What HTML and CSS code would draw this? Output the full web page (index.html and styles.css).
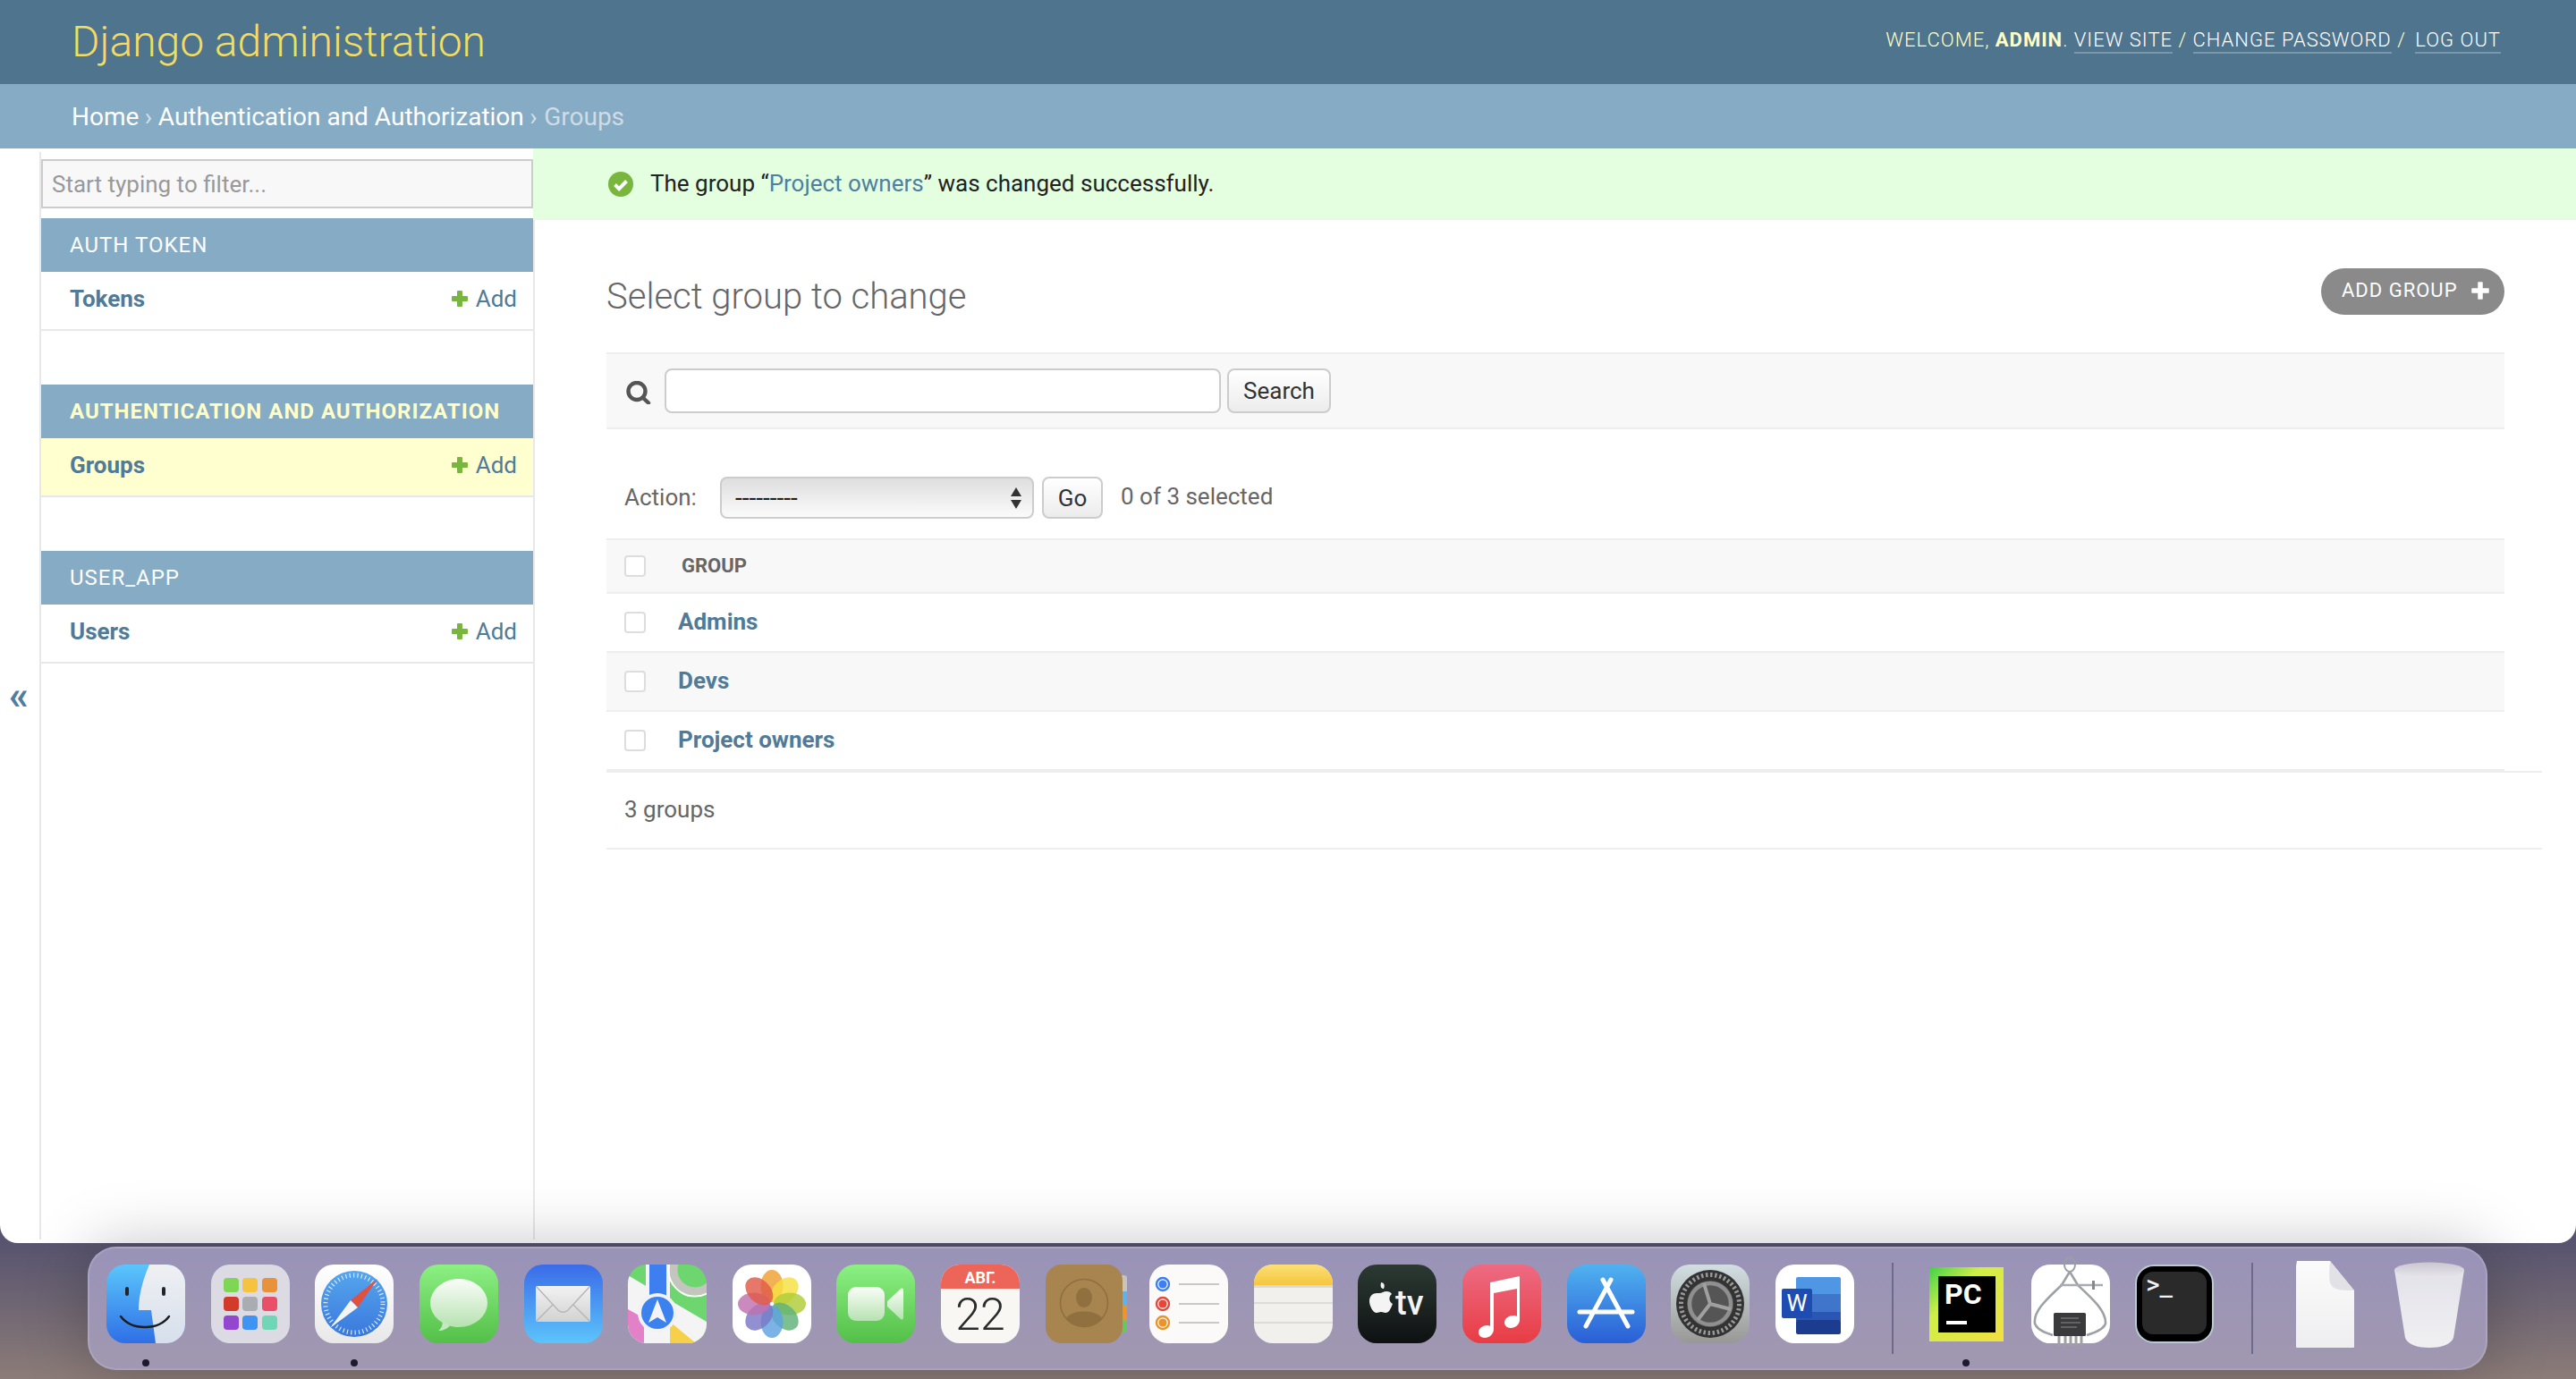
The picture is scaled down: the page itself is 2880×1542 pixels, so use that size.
FILE: index.html
```html
<!DOCTYPE html>
<html lang="en">
<head>
<meta charset="utf-8">
<title>Select group to change | Django site admin</title>
<link rel="stylesheet" href="styles.css">
</head>
<body>
<div class="window">
  <header class="site-header">
    <a class="site-name" href="#">Django administration</a>
    <div class="user-tools">WELCOME, <strong>ADMIN</strong>. <a href="#">VIEW SITE</a> / <a href="#">CHANGE PASSWORD</a> / <a class="logout" href="#">LOG OUT</a></div>
  </header>
  <nav class="breadcrumbs"><a href="#">Home</a> › <a href="#">Authentication and Authorization</a> › <span class="crumb-current">Groups</span></nav>
  <div class="main">
    <div class="toggle">«</div>
    <aside class="sidebar">
      <input class="filter" type="text" placeholder="Start typing to filter...">
      <section class="module">
        <h2 class="module-title">AUTH TOKEN</h2>
        <div class="module-row"><a class="model" href="#">Tokens</a><a class="addlink" href="#"><svg class="plus" viewBox="0 0 20 20"><path d="M8 2h4v6h6v4h-6v6H8v-6H2V8h6z"/></svg>Add</a></div>
      </section>
      <section class="module">
        <h2 class="module-title current">AUTHENTICATION AND AUTHORIZATION</h2>
        <div class="module-row selected"><a class="model" href="#">Groups</a><a class="addlink" href="#"><svg class="plus" viewBox="0 0 20 20"><path d="M8 2h4v6h6v4h-6v6H8v-6H2V8h6z"/></svg>Add</a></div>
      </section>
      <section class="module">
        <h2 class="module-title">USER_APP</h2>
        <div class="module-row"><a class="model" href="#">Users</a><a class="addlink" href="#"><svg class="plus" viewBox="0 0 20 20"><path d="M8 2h4v6h6v4h-6v6H8v-6H2V8h6z"/></svg>Add</a></div>
      </section>
    </aside>
    <main class="main-col">
      <div class="message">
        <svg class="msg-icon" viewBox="0 0 28 28"><circle cx="14" cy="14" r="14" fill="#78b63e"/><path d="M7.5 14.5l4.6 4.6 8.4-8.6" fill="none" stroke="#fff" stroke-width="4"/></svg>
        <span class="msg-text">The group “<a href="#">Project owners</a>” was changed successfully.</span>
      </div>
      <div class="content">
        <div class="title-row">
          <h1 class="page-title">Select group to change</h1>
          <a class="add-btn" href="#">ADD GROUP<svg class="add-plus" viewBox="0 0 20 20"><path d="M8 1h4v7h7v4h-7v7H8v-7H1V8h7z"/></svg></a>
        </div>
        <div class="toolbar">
          <svg class="search-icon" viewBox="0 0 29 26"><circle cx="13" cy="11.5" r="9.5" fill="none" stroke="#555" stroke-width="4.4"/><path d="M19.5 18.5l6.5 6" stroke="#555" stroke-width="4.4" stroke-linecap="round"/></svg>
          <input class="search-input" type="text">
          <button class="btn search-btn" type="button">Search</button>
        </div>
        <div class="actions">
          <label class="action-label">Action:</label>
          <div class="select-wrap">
            <select class="action-select"><option>---------</option></select>
            <svg class="select-arrows" viewBox="0 0 14 26"><path d="M7 1l6 10H1zM7 25L1 15h12z" fill="#333"/></svg>
          </div>
          <button class="btn go-btn" type="button">Go</button>
          <span class="counter">0 of 3 selected</span>
        </div>
        <table class="results">
          <thead><tr><th class="check-col"><input class="check" type="checkbox"></th><th class="group-head">GROUP</th></tr></thead>
          <tbody>
            <tr><td class="check-col"><input class="check" type="checkbox"></td><td class="name-col"><a class="model" href="#">Admins</a></td></tr>
            <tr class="alt"><td class="check-col"><input class="check" type="checkbox"></td><td class="name-col"><a class="model" href="#">Devs</a></td></tr>
            <tr class="last"><td class="check-col"><input class="check" type="checkbox"></td><td class="name-col"><a class="model" href="#">Project owners</a></td></tr>
          </tbody>
        </table>
        <p class="paginator">3 groups</p>
      </div>
    </main>
  </div>
</div>

<div class="dock">
  <div class="dock-item">
    <svg class="dock-icon" viewBox="0 0 88 88"><g clip-path="url(#clipIcon)"><rect width="88" height="88" fill="url(#gFinderL)"/><path d="M48 0H88V88H55L50 51H36C36 32 42 14 48 0z" fill="url(#gFinderR)"/></g><rect x="21" y="25" width="4" height="10" rx="2" fill="#20242c"/><rect x="62" y="25" width="4" height="10" rx="2" fill="#20242c"/><path d="M16 58C28 74 58 74 70 58" fill="none" stroke="#1c1c20" stroke-width="2.4" stroke-linecap="round"/></svg>
    <i class="dot"></i>
  </div>
  <div class="dock-item">
    <svg class="dock-icon" viewBox="0 0 88 88"><rect width="88" height="88" rx="21" fill="#dcdbe3"/><rect x="14" y="15" width="17" height="16" rx="4" fill="#7ed654"/><rect x="35" y="15" width="17" height="16" rx="4" fill="#f6c33f"/><rect x="57" y="15" width="17" height="16" rx="4" fill="#e8923a"/><rect x="14" y="36" width="17" height="16" rx="4" fill="#d23a2c"/><rect x="35" y="36" width="17" height="16" rx="4" fill="#a9adb1"/><rect x="57" y="36" width="17" height="16" rx="4" fill="#e94f68"/><rect x="14" y="57" width="17" height="16" rx="4" fill="#9347cf"/><rect x="35" y="57" width="17" height="16" rx="4" fill="#3f93f2"/><rect x="57" y="57" width="17" height="16" rx="4" fill="#6fd6b6"/></svg>
  </div>
  <div class="dock-item">
    <svg class="dock-icon" viewBox="0 0 88 88"><rect width="88" height="88" rx="21" fill="url(#gWhite)"/><circle cx="44" cy="44" r="37" fill="url(#gSafari)"/><circle cx="44" cy="44" r="32" fill="none" stroke="#d6e8fb" stroke-width="5" stroke-dasharray="1.2 3.2"/><path d="M70 16L48 48 40 40z" fill="#e2503f"/><path d="M17 71L40 40 48 48z" fill="#f4f4f4"/></svg>
    <i class="dot"></i>
  </div>
  <div class="dock-item">
    <svg class="dock-icon" viewBox="0 0 88 88"><rect width="88" height="88" rx="21" fill="url(#gMsg)"/><ellipse cx="44" cy="43" rx="32" ry="27" fill="url(#gBub)"/><path d="M26 63c0 5-2 9-5 11 5 0 10-2 13-6z" fill="#c4e8c0"/></svg>
  </div>
  <div class="dock-item">
    <svg class="dock-icon" viewBox="0 0 88 88"><rect width="88" height="88" rx="21" fill="url(#gMail)"/><rect x="13" y="24" width="61" height="40" rx="2" fill="url(#gEnv)"/><path d="M14 25l24 26c3 3 8 3 11 0l24-26M14 63l18-18M73 63L55 45" fill="none" stroke="#b5b5b8" stroke-width="1.4"/></svg>
  </div>
  <div class="dock-item">
    <svg class="dock-icon" viewBox="0 0 88 88"><g clip-path="url(#clipIcon)"><rect width="88" height="88" fill="#6ed66f"/><path d="M0 12L88 64V88H0z" fill="#f4f4f4"/><path d="M0 50L18 60V88H0z" fill="#e280c8"/><path d="M47 64L76 88H47z" fill="#f5d048"/><rect x="20" width="27" height="88" fill="#f4f4f4"/><rect x="24" width="19" height="50" fill="#3d7ff0"/><circle cx="75" cy="6" r="24" fill="none" stroke="#c5c5c0" stroke-width="9"/><circle cx="75" cy="6" r="29.5" fill="none" stroke="#fff" stroke-width="2"/></g><circle cx="33" cy="54" r="22" fill="#f2f2f4"/><circle cx="33" cy="54" r="18" fill="#3b82ee"/><path d="M33 39L43 65 33 59 23 65z" fill="#f4f4f6"/></svg>
  </div>
  <div class="dock-item">
    <svg class="dock-icon" viewBox="0 0 88 88"><rect width="88" height="88" rx="21" fill="#fff"/><g fill-opacity=".82"><ellipse cx="44" cy="24" rx="12.5" ry="18" fill="#f0a030"/><ellipse cx="44" cy="24" rx="12.5" ry="18" fill="#f5e040" transform="rotate(45 44 44)"/><ellipse cx="44" cy="24" rx="12.5" ry="18" fill="#b0cc38" transform="rotate(90 44 44)"/><ellipse cx="44" cy="24" rx="12.5" ry="18" fill="#5fb277" transform="rotate(135 44 44)"/><ellipse cx="44" cy="24" rx="12.5" ry="18" fill="#5ea2e0" transform="rotate(180 44 44)"/><ellipse cx="44" cy="24" rx="12.5" ry="18" fill="#7a78c6" transform="rotate(225 44 44)"/><ellipse cx="44" cy="24" rx="12.5" ry="18" fill="#c070ae" transform="rotate(270 44 44)"/><ellipse cx="44" cy="24" rx="12.5" ry="18" fill="#df5a48" transform="rotate(315 44 44)"/></g></svg>
  </div>
  <div class="dock-item">
    <svg class="dock-icon" viewBox="0 0 88 88"><rect width="88" height="88" rx="21" fill="url(#gMsg)"/><rect x="13" y="25" width="41" height="38" rx="9" fill="url(#gBub)"/><path d="M57 41L72 27c2-1 3 0 3 2v30c0 2-1 3-3 2L57 47z" fill="url(#gBub)"/></svg>
  </div>
  <div class="dock-item">
    <svg class="dock-icon" viewBox="0 0 88 88"><g clip-path="url(#clipIcon)"><rect width="88" height="88" fill="#f8f7f4"/><rect width="88" height="27" fill="#ec6558"/></g><text class="cal-month" x="44" y="21" text-anchor="middle">АВГ.</text><text class="cal-day" x="44" y="73" text-anchor="middle">22</text></svg>
  </div>
  <div class="dock-item">
    <svg class="dock-icon" viewBox="0 0 88 88"><rect x="80" y="12" width="11" height="20" rx="3" fill="#c8c4b8"/><rect x="80" y="30" width="11" height="18" fill="#5ab4f0"/><rect x="80" y="46" width="11" height="18" fill="#ee9428"/><rect x="80" y="62" width="11" height="14" rx="3" fill="#68c860"/><rect width="86" height="88" rx="18" fill="#a8844f"/><circle cx="43" cy="43" r="26.5" fill="none" stroke="#8f6f42" stroke-width="1.6"/><ellipse cx="43" cy="37" rx="9" ry="11" fill="#90703f"/><path d="M23 60c6-10 34-10 40 0-10 12-30 12-40 0z" fill="#90703f"/></svg>
  </div>
  <div class="dock-item">
    <svg class="dock-icon" viewBox="0 0 88 88"><rect width="88" height="88" rx="21" fill="#fbfaf8"/><circle cx="15" cy="22" r="7" fill="#fff" stroke="#3b7ff2" stroke-width="2.4"/><circle cx="15" cy="22" r="4.6" fill="#3b7ff2"/><circle cx="15" cy="44" r="7" fill="#fff" stroke="#e5483a" stroke-width="2.4"/><circle cx="15" cy="44" r="4.6" fill="#e5483a"/><circle cx="15" cy="65" r="7" fill="#fff" stroke="#e8942c" stroke-width="2.4"/><circle cx="15" cy="65" r="4.6" fill="#e8942c"/><path d="M33 22h45M33 44h45M33 65h45" stroke="#b8b8b8" stroke-width="1.6"/></svg>
  </div>
  <div class="dock-item">
    <svg class="dock-icon" viewBox="0 0 88 88"><g clip-path="url(#clipIcon)"><rect width="88" height="88" fill="#f2f0ec"/><rect width="88" height="23" fill="url(#gNote)"/><rect y="23" width="88" height="3" fill="#dcdad6"/></g><path d="M0 43h88M0 65h88" stroke="#d6d4d0" stroke-width="1.5"/></svg>
  </div>
  <div class="dock-item">
    <svg class="dock-icon" viewBox="0 0 88 88"><rect width="88" height="88" rx="21" fill="url(#gTv)"/><path d="M24 32c3 0 5-2 8-2s5 1 6 3c-4 3-3 9 1 11-2 5-4 10-8 10-2 0-3-1-5-1s-3 1-5 1c-4 0-8-8-8-13 0-6 4-9 8-9 1 0 2 0 3 0zM29 27c-3 0-4-2-3-7 3 0 5 3 3 7z" fill="#f4f4f4"/><text class="tv-text" x="42" y="56">tv</text></svg>
  </div>
  <div class="dock-item">
    <svg class="dock-icon" viewBox="0 0 88 88"><rect width="88" height="88" rx="21" fill="url(#gMus)"/><path d="M31 20L64 13V62c0 5-5 9-10 9-4 0-7-3-7-6 0-5 5-8 10-8 2 0 3 0 4 1V27L35 32V72c0 6-5 10-10 10-4 0-7-3-7-6 0-5 5-8 10-8 1 0 2 0 3 1z" fill="#fff"/></svg>
  </div>
  <div class="dock-item">
    <svg class="dock-icon" viewBox="0 0 88 88"><rect width="88" height="88" rx="21" fill="url(#gApp)"/><path d="M49 17L21 69M40 17l28 52M14 53h59" fill="none" stroke="#fff" stroke-width="5" stroke-linecap="round"/></svg>
  </div>
  <div class="dock-item">
    <svg class="dock-icon" viewBox="0 0 88 88"><rect width="88" height="88" rx="21" fill="url(#gGear)"/><circle cx="44" cy="44" r="38" fill="#333"/><circle cx="44" cy="44" r="32.5" fill="none" stroke="#9a9a9a" stroke-width="5" stroke-dasharray="2.4 2.7"/><circle cx="44" cy="44" r="26" fill="#555"/><circle cx="44" cy="44" r="23" fill="none" stroke="#8f8f8f" stroke-width="4.5"/><path d="M44 44L37 21M44 44L67 50M44 44L30 62" stroke="#a0a0a0" stroke-width="4"/></svg>
  </div>
  <div class="dock-item">
    <svg class="dock-icon" viewBox="0 0 88 88"><rect width="88" height="88" rx="21" fill="#fff"/><rect x="23" y="14" width="50" height="21" rx="2" fill="#4f97e4"/><rect x="23" y="33" width="50" height="21" fill="#3f76cc"/><rect x="23" y="53" width="50" height="10" fill="#2b56b4"/><rect x="23" y="62" width="50" height="16" rx="2" fill="#1c3d8f"/><rect x="7" y="27" width="34" height="33" rx="2" fill="#1f4cb0"/><text class="word-w" x="24" y="52" text-anchor="middle">W</text></svg>
  </div>
  <span class="dock-sep first-sep"></span>
  <div class="dock-item">
    <svg class="dock-icon" viewBox="0 0 88 88"><rect x="3" y="3" width="83" height="83" fill="url(#gPc)"/><rect x="13" y="13" width="64" height="63" fill="#000"/><text class="pc-text" x="20" y="44">PC</text><rect x="22" y="63" width="23" height="4" fill="#fff"/></svg>
    <i class="dot"></i>
  </div>
  <div class="dock-item">
    <svg class="dock-icon" viewBox="0 0 88 88"><rect width="88" height="88" rx="21" fill="#fff"/><ellipse cx="43" cy="0" rx="6" ry="8" fill="none" stroke="#9a9ea4" stroke-width="2"/><path d="M43 8L34 23C18 38 2 52 4 66 6 72 14 76 24 79M43 8L52 23C68 38 84 52 83 66 81 72 72 76 62 79" fill="none" stroke="#9da1a6" stroke-width="2.6"/><path d="M32 23H80" stroke="#a8abb0" stroke-width="2.4"/><rect x="68" y="18" width="3" height="10" fill="#888"/><rect x="25" y="54" width="36" height="26" rx="1.5" fill="#3a3a3c"/><path d="M31 80v11M38 80v11M44 80v11M50 80v11M56 80v11" stroke="#a0a0a0" stroke-width="3"/><path d="M33 60h20M33 65h22M33 70h18" stroke="#8a8a8c" stroke-width="1"/></svg>
  </div>
  <div class="dock-item">
    <svg class="dock-icon" viewBox="0 0 88 88"><rect x="1" y="1" width="86" height="86" rx="20" fill="#000" stroke="#b9cad2" stroke-width="2"/><rect x="8" y="8" width="72" height="70" rx="12" fill="#2a2a2a"/><text class="term-text" x="13" y="31">&gt;_</text></svg>
  </div>
  <span class="dock-sep second-sep"></span>
  <div class="dock-item">
    <svg class="dock-icon" viewBox="0 0 88 88"><path d="M12 -4H49L76 29V92a1 1 0 0 1-1 1H12a1 1 0 0 1-1-1V2z" fill="url(#gDoc)"/><path d="M49 -4C48 10 47 21 52 25 56 29 66 29 76 29z" fill="#e2e2e6"/></svg>
  </div>
  <div class="dock-item">
    <svg class="dock-icon" viewBox="0 0 88 88"><path d="M5 6L17 82C20 90 32 93 44 93S68 90 71 82L83 6z" fill="url(#gTrash)"/><ellipse cx="44" cy="6" rx="39" ry="8.5" fill="url(#gTrashTop)"/></svg>
  </div>
</div>

<svg class="defs-holder" width="0" height="0" aria-hidden="true">
  <defs>
    <clipPath id="clipIcon"><rect width="88" height="88" rx="21"/></clipPath>
    <linearGradient id="gWhite" x1="0" y1="0" x2="0" y2="1"><stop offset="0" stop-color="#fff"/><stop offset="1" stop-color="#e8e8e8"/></linearGradient>
    <linearGradient id="gFinderL" x1="0" y1="0" x2="0" y2="1"><stop offset="0" stop-color="#5ac6fb"/><stop offset="1" stop-color="#2f6fe6"/></linearGradient>
    <linearGradient id="gFinderR" x1="0" y1="0" x2="0" y2="1"><stop offset="0" stop-color="#eff0f3"/><stop offset="1" stop-color="#d6dfec"/></linearGradient>
    <linearGradient id="gSafari" x1="0" y1="0" x2="0" y2="1"><stop offset="0" stop-color="#55a6ee"/><stop offset="1" stop-color="#3a78dc"/></linearGradient>
    <linearGradient id="gMsg" x1="0" y1="0" x2="0" y2="1"><stop offset="0" stop-color="#8cf083"/><stop offset="1" stop-color="#53bf48"/></linearGradient>
    <linearGradient id="gBub" x1="0" y1="0" x2="0" y2="1"><stop offset="0" stop-color="#fafdf9"/><stop offset="1" stop-color="#b6e2b0"/></linearGradient>
    <linearGradient id="gMail" x1="0" y1="0" x2="0" y2="1"><stop offset="0" stop-color="#3a6ce8"/><stop offset="1" stop-color="#5cc4fb"/></linearGradient>
    <linearGradient id="gEnv" x1="0" y1="0" x2="0" y2="1"><stop offset="0" stop-color="#f2f2f2"/><stop offset="1" stop-color="#d2d2d2"/></linearGradient>
    <linearGradient id="gNote" x1="0" y1="0" x2="0" y2="1"><stop offset="0" stop-color="#fbdf76"/><stop offset="1" stop-color="#f6c63e"/></linearGradient>
    <linearGradient id="gTv" x1="0" y1="0" x2="0" y2="1"><stop offset="0" stop-color="#2c3a33"/><stop offset="1" stop-color="#0e1112"/></linearGradient>
    <linearGradient id="gMus" x1="0" y1="0" x2="0" y2="1"><stop offset="0" stop-color="#ed6b82"/><stop offset="1" stop-color="#e83c44"/></linearGradient>
    <linearGradient id="gApp" x1="0" y1="0" x2="0" y2="1"><stop offset="0" stop-color="#50b2f0"/><stop offset="1" stop-color="#2a5ed6"/></linearGradient>
    <linearGradient id="gGear" x1="0" y1="0" x2="0" y2="1"><stop offset="0" stop-color="#d2dee2"/><stop offset="1" stop-color="#989896"/></linearGradient>
    <linearGradient id="gPc" x1="0" y1="0" x2="1" y2="1"><stop offset="0" stop-color="#3fd04a"/><stop offset=".35" stop-color="#d0ee48"/><stop offset="1" stop-color="#f2e040"/></linearGradient>
    <linearGradient id="gDoc" x1="0" y1="0" x2="0" y2="1"><stop offset="0" stop-color="#fbfbfb"/><stop offset="1" stop-color="#eeeef0"/></linearGradient>
    <linearGradient id="gTrash" x1="0" y1="0" x2="0" y2="1"><stop offset="0" stop-color="#e4e2ea"/><stop offset="1" stop-color="#f0f0f2"/></linearGradient>
    <linearGradient id="gTrashTop" x1="0" y1="0" x2="0" y2="1"><stop offset="0" stop-color="#c9c6d0"/><stop offset="1" stop-color="#e8e6ec"/></linearGradient>
  </defs>
</svg>
</body>
</html>
```

FILE: styles.css
```css
* { box-sizing: border-box; }
html, body { margin: 0; padding: 0; }
body {
  width: 2880px;
  height: 1542px;
  overflow: hidden;
  font-family: Roboto, "Liberation Sans", sans-serif;
  font-size: 26px;
  color: #333;
  background: linear-gradient(180deg, #58546f 1390px, #8c7c78 1542px);
}
a { text-decoration: none; color: #4f7fa0; }

.window {
  height: 1390px;
  background: #fff;
  border-radius: 0 0 20px 20px;
  overflow: hidden;
  display: flex;
  flex-direction: column;
  padding-bottom: 4px;
}

.site-header {
  height: 94px;
  flex: none;
  background: #4f748e;
  display: flex;
  align-items: center;
  justify-content: space-between;
  padding: 0 84px 2px 80px;
}
.site-name { font-size: 48px; font-weight: 300; color: #f2dc62; }
.user-tools {
  font-size: 22px;
  font-weight: 300;
  letter-spacing: 1px;
  color: #ffffc8;
  margin-bottom: 4px;
  white-space: nowrap;
}
.user-tools strong { font-weight: 700; }
.user-tools a {
  color: #fff;
  padding-bottom: 1px;
  border-bottom: 2px solid rgba(255,255,255,.25);
}
.user-tools .logout { margin-left: 4px; }

.breadcrumbs {
  height: 72px;
  flex: none;
  background: #85abc5;
  display: flex;
  align-items: center;
  padding: 0 80px;
  color: #d3e0ea;
  font-size: 28px;
  gap: 6.5px;
}
.breadcrumbs a { color: #fff; }
.crumb-current { color: #cfdce6; margin-left: 1px; }

.main { flex: 1; display: flex; min-height: 0; }

.toggle {
  width: 46px;
  flex: none;
  margin-top: 4px;
  border-right: 2px solid #e8e8e8;
  color: #4f7fa0;
  font-size: 44px;
  font-weight: 700;
  display: flex;
  align-items: center;
  justify-content: center;
  padding-right: 2px;
}

.sidebar {
  width: 552px;
  flex: none;
  border-right: 2px solid #e8e8e8;
  padding-top: 12px;
}
.filter {
  display: block;
  width: 100%;
  height: 55px;
  margin-bottom: 11px;
  padding: 0 10px;
  border: 2px solid #ccc;
  background: #f8f8f8;
  font: 400 26px Roboto, sans-serif;
  outline: none;
}
.filter::placeholder { color: #999; opacity: 1; }

.module { margin-bottom: 60px; }
.module-title {
  margin: 0;
  height: 60px;
  padding-left: 32px;
  background: #85abc5;
  color: #fff;
  font-size: 24px;
  font-weight: 400;
  letter-spacing: 1px;
  line-height: 60px;
  white-space: nowrap;
}
.module-title.current { color: #ffffc8; font-weight: 700; }
.module-row {
  height: 66px;
  padding: 0 18px 4px 32px;
  display: flex;
  align-items: center;
  justify-content: space-between;
  border-bottom: 2px solid #e8e8e8;
  font-size: 26px;
}
.module-row.selected { background: #ffffd0; }
.model { font-weight: 700; font-size: 26px; color: #4f7b99; }
.addlink { display: flex; align-items: center; gap: 8px; color: #4f7b99; }
.plus { width: 20px; height: 20px; }
.plus path { fill: #78b63e; stroke: #78b63e; stroke-width: 2; stroke-linejoin: round; }

.main-col { flex: 1; min-width: 0; margin-left: -2px; }
.message {
  height: 80px;
  background: #e3ffe0;
  display: flex;
  align-items: center;
  gap: 19px;
  padding-left: 84px;
  font-size: 26px;
  color: #222;
}
.msg-icon { width: 28px; height: 28px; }
.msg-text { margin-top: -2px; }

.content { padding: 0 80px 0 82px; }
.title-row {
  margin-top: 54px;
  height: 52px;
  display: flex;
  justify-content: space-between;
}
.page-title {
  margin: 0;
  padding-top: 6px;
  font-size: 40px;
  font-weight: 300;
  color: #666;
  line-height: 51px;
}
.add-btn {
  width: 205px;
  height: 52px;
  border-radius: 26px;
  background: #8a8a8a;
  color: #fff;
  font-size: 22px;
  letter-spacing: 1px;
  display: flex;
  align-items: center;
  padding: 0 0 3px 23px;
  white-space: nowrap;
}
.add-plus { width: 20px; height: 20px; margin-left: 15px; }
.add-plus path { fill: #fff; stroke: #fff; stroke-width: 1.5; stroke-linejoin: round; }

.toolbar {
  margin-top: 42px;
  height: 86px;
  background: #f8f8f8;
  border-top: 2px solid #eee;
  border-bottom: 2px solid #eee;
  display: flex;
  align-items: center;
  padding-left: 21px;
}
.search-icon { width: 29px; height: 26px; margin: 3px 15px 0 0; }
.search-input {
  width: 622px;
  height: 50px;
  border: 2px solid #ccc;
  border-radius: 8px;
  background: #fff;
  outline: none;
}
.btn {
  border: 2px solid #ccc;
  border-radius: 8px;
  background: linear-gradient(180deg, #fff, #ececec);
  font: 400 26px Roboto, sans-serif;
  color: #333;
  padding: 0;
}
.search-btn { width: 116px; height: 50px; margin-left: 7px; }

.actions {
  margin-top: 53px;
  height: 47px;
  margin-bottom: 22px;
  display: flex;
  align-items: center;
  padding-left: 20px;
}
.action-label { width: 107px; font-size: 26px; color: #666; margin-top: -2px; }
.select-wrap { position: relative; width: 351px; height: 47px; }
.action-select {
  appearance: none;
  width: 100%;
  height: 100%;
  border: 2px solid #ccc;
  border-radius: 8px;
  padding: 0 0 0 15px;
  background: linear-gradient(180deg, #dedede, #fbfbfb);
  font: 400 28px Roboto, sans-serif;
  color: #222;
  outline: none;
}
.select-arrows { position: absolute; right: 13px; top: 11px; width: 14px; height: 26px; }
.go-btn { width: 68px; height: 47px; margin-left: 9px; }
.counter { margin-left: 20px; font-size: 26px; color: #666; margin-top: -4px; }

.results { width: 100%; border-collapse: separate; border-spacing: 0; }
.results th, .results td {
  padding: 0;
  text-align: left;
  border-bottom: 2px solid #eee;
  height: 66px;
  vertical-align: middle;
}
.results thead th {
  height: 62px;
  background: #f8f8f8;
  border-top: 2px solid #eee;
}
.check-col { width: 80px; padding-left: 20px !important; }
.group-head { padding: 0 0 1px 4px !important; font-size: 22px; font-weight: 700; color: #666; }
.name-col { padding-bottom: 3px !important; }
.alt td { background: #f8f8f8; }
.check {
  appearance: none;
  display: block;
  width: 24px;
  height: 24px;
  margin: 0;
  border: 2px solid #ddd;
  border-radius: 4px;
  background: #fff;
}

.paginator {
  margin: 0 -42px 0 0;
  height: 88px;
  padding-left: 20px;
  border-top: 2px solid #eee;
  border-bottom: 2px solid #eee;
  font-size: 26px;
  color: #666;
  line-height: 83px;
}

.dock {
  position: relative;
  margin: 4px 0 0 98px;
  width: 2683px;
  height: 138px;
  padding: 18px 0 0 5px;
  border: 2px solid rgba(255,255,255,.14);
  border-radius: 32px;
  background: linear-gradient(180deg, #9993b8, #a198b0);
  box-shadow: 0 0 70px rgba(0,0,0,.25);
  display: flex;
}
.dock-item {
  width: 116.6px;
  flex: none;
  display: flex;
  flex-direction: column;
  align-items: center;
}
.dock-icon { width: 88px; height: 88px; overflow: visible; flex: none; }
.dot {
  display: block;
  width: 8px;
  height: 8px;
  margin-top: 18px;
  border-radius: 50%;
  background: #1d1a30;
}
.dock-sep {
  flex: none;
  width: 2px;
  height: 102px;
  margin-top: -2px;
  background: #6e6a8a;
}
.first-sep { margin-left: 28px; margin-right: 22.7px; }
.second-sep { margin-left: 27px; margin-right: 22.7px; }

.cal-month { font: 700 18px Roboto, sans-serif; fill: #fff; }
.cal-day { font: 300 50px Roboto, sans-serif; fill: #2a2a2a; }
.tv-text { font: 500 38px Roboto, sans-serif; fill: #f4f4f4; }
.word-w { font: 400 26px Roboto, sans-serif; fill: #fff; }
.pc-text { font: 700 32px Roboto, sans-serif; fill: #fff; }
.term-text { font: 700 24px "DejaVu Sans Mono", monospace; fill: #f2f2f2; }

.defs-holder { display: block; width: 0; height: 0; }
```
